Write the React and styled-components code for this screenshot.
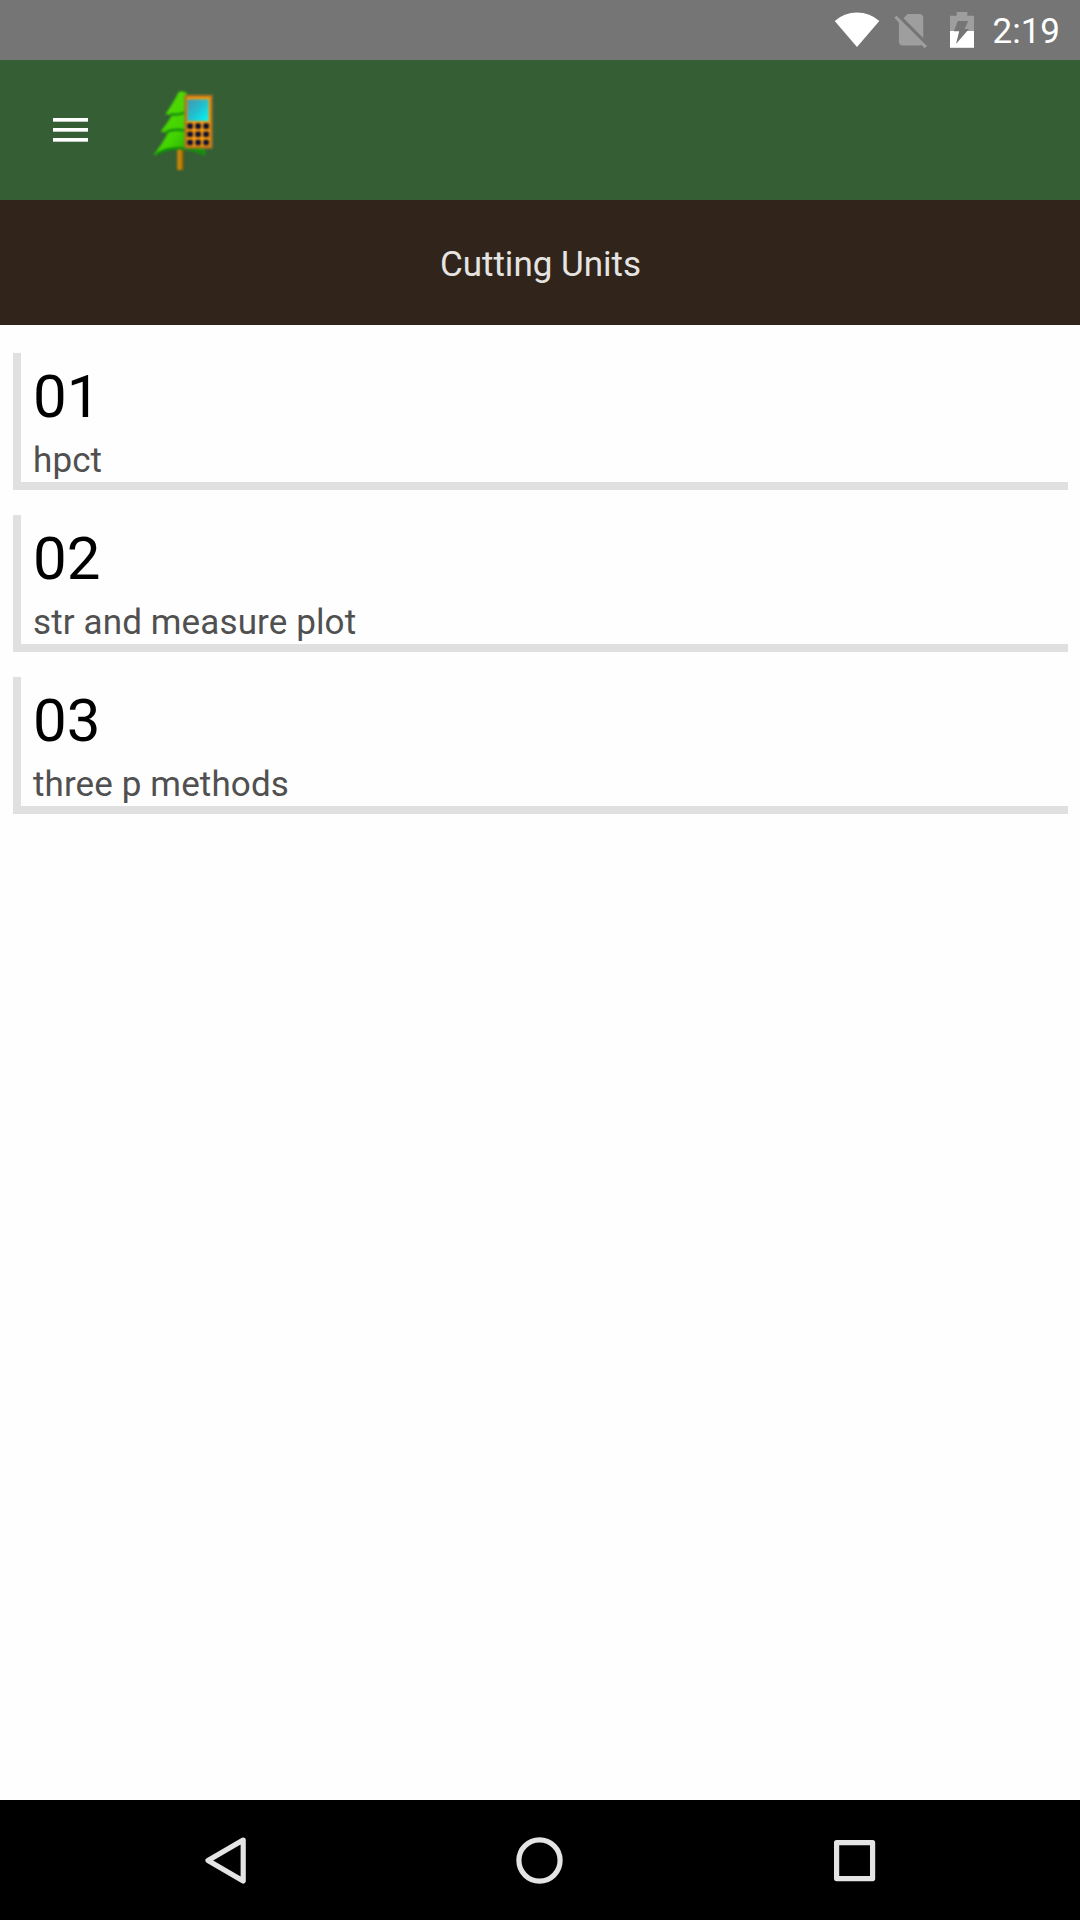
import React from "react";
import styled, { createGlobalStyle } from "styled-components";

const GlobalStyle = createGlobalStyle`
  * { box-sizing: border-box; }
  body { margin: 0; background: #fefefe; font-family: Roboto, "Noto Sans", sans-serif; }
  svg { display: block; flex: none; }
`;

const Screen = styled.div`
  display: flex;
  flex-direction: column;
  width: 1080px;
  height: 1920px;
  background: #fefefe;
`;

const StatusBar = styled.header`
  display: flex;
  align-items: center;
  justify-content: flex-end;
  height: 60px;
  padding-right: 20px;
  background: #757575;
`;

const Clock = styled.time`
  width: 68px;
  margin-left: 15px;
  padding-top: 4px;
  color: #fff;
  font-size: 35px;
  line-height: 60px;
  text-align: right;
`;

const Toolbar = styled.nav`
  display: flex;
  align-items: center;
  height: 140px;
  padding-left: 53px;
  background: #355e35;
`;

const MenuButton = styled.button`
  display: flex;
  flex-direction: column;
  gap: 6px;
  width: 35px;
  padding: 0;
  border: 0;
  background: none;
`;

const MenuLine = styled.span`
  height: 4px;
  background: linear-gradient(#fff 3px, #bccbbc 3px);
`;

const Logo = styled.svg`
  margin-left: 62px;
`;

const TitleBar = styled.div`
  display: flex;
  align-items: center;
  justify-content: center;
  height: 125px;
  padding: 4px 0 0 1px;
  background: #31241a;
`;

const Title = styled.h1`
  margin: 0;
  color: #e6e4e3;
  font-size: 35px;
  font-weight: 400;
  line-height: 42px;
`;

const UnitList = styled.ul`
  display: flex;
  flex: 1;
  flex-direction: column;
  gap: 25px;
  margin: 0;
  padding: 28px 12px 0 13px;
  list-style: none;
`;

const Unit = styled.li`
  display: flex;
  flex-direction: column;
  height: 137px;
  padding: 9px 0 0 12px;
  border-left: 8px solid #e0e0e0;
  border-bottom: 8px solid #e0e0e0;
`;

const UnitCode = styled.span`
  color: #000;
  font-size: 60px;
  line-height: 70px;
`;

const UnitName = styled.span`
  color: #505050;
  font-size: 35px;
  letter-spacing: 0.12px;
  line-height: 41px;
  margin-top: 8px;
`;

const NavBar = styled.footer`
  display: flex;
  align-items: center;
  justify-content: space-between;
  height: 120px;
  padding: 0 196px;
  background: #000;
`;

const NavIcon = styled.svg`
  fill: none;
  stroke: #e4e4e4;
  stroke-width: 5.2px;
  stroke-linejoin: round;
`;

const units = [
  { code: "01", name: "hpct" },
  { code: "02", name: "str and measure plot" },
  { code: "03", name: "three p methods" },
];

function StatusIcons() {
  return (
    <svg width="146" height="60" viewBox="831 0 146 60">
      <path d="M857 47 L834.7 21 Q844 12.5 857 12.5 T879.3 21 Z" fill="#fff" />
      <g transform="translate(890.2 8.9) scale(1.74)" fill="#9e9e9e">
        <path d="M18.99 5c0-1.1-.89-2-1.99-2h-7L7.66 5.34 19 16.68 18.99 5zM3.65 3.88L2.38 5.15 5 7.77V19c0 1.1.9 2 2 2h10.01c.35 0 .67-.1.96-.26l1.88 1.88 1.27-1.27L3.65 3.88z" />
      </g>
      <path d="M950 15.7h6.7V12h10.6v3.7H974V31h-24z" fill="#9e9e9e" />
      <path d="M950 31h24v16.8h-24z" fill="#fff" />
      <path d="M957.8 21h10.4l-3.7 7.9h4.4L956 44l3.2-12.7h-5.3z" fill="#757575" />
    </svg>
  );
}

function TreeLogo() {
  const keys = [0, 1, 2];
  return (
    <Logo width="66" height="84" viewBox="150 88 66 84">
      <defs>
        <linearGradient id="leaf" x1="0" y1="0" x2="1" y2="1">
          <stop offset="0" stopColor="#5bdc08" />
          <stop offset=".55" stopColor="#43d400" />
          <stop offset="1" stopColor="#108f08" />
        </linearGradient>
        <linearGradient id="glass" x1="0" y1="0" x2="1" y2="1">
          <stop offset="0" stopColor="#4793ad" />
          <stop offset=".5" stopColor="#22bfce" />
          <stop offset="1" stopColor="#00f8fb" />
        </linearGradient>
        <linearGradient id="trunk">
          <stop offset="0" stopColor="#a97712" />
          <stop offset=".45" stopColor="#d88b00" />
          <stop offset="1" stopColor="#59501b" />
        </linearGradient>
        <filter id="soft" x="-5%" y="-5%" width="110%" height="110%" colorInterpolationFilters="sRGB">
          <feGaussianBlur stdDeviation=".85" />
        </filter>
      </defs>
      <g filter="url(#soft)">
        <path d="M177 148h7v22h-7z" fill="url(#trunk)" />
        <path d="M179 91.5 C175 99 170.5 107 165.5 114 Q169 115.5 172.5 114 C169 120 164.5 127 160.5 131.5 Q165 133 168.5 131.5 C165 139 159 148 154 154.5 Q155 156 158 153.5 Q168 149 181 149 Q193 150 203 154.5 Q207 156 205 151 L202 147 L187 145 V93 L183 91.5z" fill="url(#leaf)" stroke="#2f9a16" strokeWidth=".8" />
        <path d="M171 114.3 Q178 115.5 185 112.5 M166 131.8 Q175 128.5 185 130.5" fill="none" stroke="#148c0e" strokeWidth="2.4" />
        <path d="M156 154.5 Q167 147.5 181 148.3 Q194 149 205 153.5" fill="none" stroke="#118b0c" strokeWidth="2.6" />
        <path d="M185 95h27v53h-27z" fill="#ff9f10" />
        <path d="M185.7 96.2h25.6v51.2h-25.6z" fill="none" stroke="#bf730f" strokeWidth="2.2" />
        <path d="M184.8 95h27.4v53.2h-27.4z" fill="none" stroke="#8a7440" strokeWidth=".7" />
        <path d="M187.3 99.3h21.2v21.7h-21.2z" fill="url(#glass)" />
        {keys.map((row) =>
          keys.map((col) => (
            <rect
              key={`${row}-${col}`}
              x={187.3 + col * 8}
              y={123.3 + row * 8.2}
              width="5.6"
              height="5.6"
              rx="1.2"
              fill="#080c30"
            />
          ))
        )}
      </g>
    </Logo>
  );
}

export default function App() {
  return (
    <Screen>
      <GlobalStyle />
      <StatusBar>
        <StatusIcons />
        <Clock>2:19</Clock>
      </StatusBar>
      <Toolbar>
        <MenuButton aria-label="Menu">
          <MenuLine />
          <MenuLine />
          <MenuLine />
        </MenuButton>
        <TreeLogo />
      </Toolbar>
      <TitleBar>
        <Title>Cutting Units</Title>
      </TitleBar>
      <UnitList>
        {units.map((unit) => (
          <Unit key={unit.code}>
            <UnitCode>{unit.code}</UnitCode>
            <UnitName>{unit.name}</UnitName>
          </Unit>
        ))}
      </UnitList>
      <NavBar>
        <NavIcon width="60" height="60" viewBox="196 1830 60 60">
          <path d="M243.2 1840 L208 1860.5 L243.2 1881z" />
        </NavIcon>
        <NavIcon width="60" height="60" viewBox="510 1830 60 60">
          <circle cx="539.5" cy="1860.5" r="20.6" />
        </NavIcon>
        <NavIcon width="60" height="60" viewBox="824 1830 60 60">
          <rect x="836.6" y="1842.6" width="36" height="36" />
        </NavIcon>
      </NavBar>
    </Screen>
  );
}
